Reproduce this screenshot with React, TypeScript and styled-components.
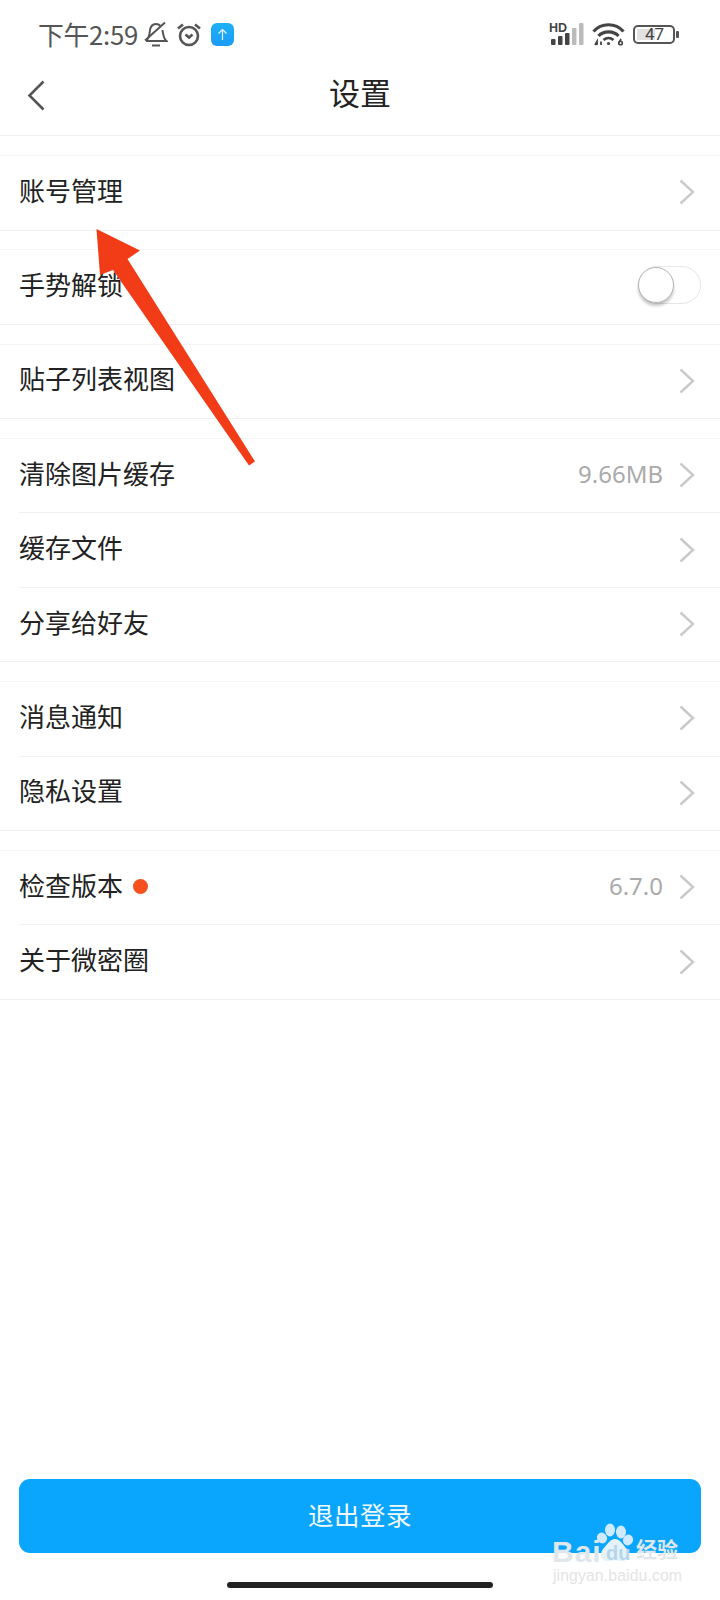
import React from 'react';
import styled, { createGlobalStyle } from 'styled-components';

const GlobalStyle = createGlobalStyle`
  html, body {
    margin: 0;
    padding: 0;
    background: #fff;
  }
  * {
    box-sizing: border-box;
  }
`;

const Page = styled.div`
  position: relative;
  display: flex;
  flex-direction: column;
  width: 720px;
  height: 1600px;
  overflow: hidden;
  background: #fff;
  font-family: "Noto Sans CJK SC", "Noto Sans", sans-serif;
`;

const StatusBar = styled.div`
  display: flex;
  align-items: center;
  justify-content: space-between;
  height: 60px;
  padding: 8px 42px 0 38px;
  color: #555;
`;

const StatusGroup = styled.div`
  display: flex;
  align-items: center;
  gap: ${(p: { $gap: number }) => p.$gap}px;
`;

const Time = styled.span`
  width: 99px;
  margin-right: -1px;
  font-size: 25.8px;
  line-height: 32px;
  letter-spacing: -0.3px;
  white-space: nowrap;
`;

const UploadBadge = styled.div`
  display: flex;
  align-items: center;
  justify-content: center;
  width: 23px;
  height: 23px;
  margin-left: 1px;
  border-radius: 6px;
  background: linear-gradient(180deg, #1fb0f5, #1a9bf8);
`;

const Battery = styled.div`
  position: relative;
  display: flex;
  align-items: center;
  justify-content: center;
  width: 42px;
  height: 19px;
  margin-right: 3px;
  border: 2px solid #555;
  border-radius: 5px;
  font-size: 17px;
  line-height: 15px;
  color: #444;
  font-family: "Roboto", sans-serif;
  &::after {
    content: '';
    position: absolute;
    right: -6px;
    top: 4px;
    width: 3px;
    height: 7px;
    border-radius: 1px;
    background: #555;
  }
`;

const BatteryLevel = styled.span`
  position: absolute;
  left: 2px;
  top: 2px;
  bottom: 2px;
  width: ${(p: { $level: number }) => p.$level}%;
  background: #e2e2e2;
`;

const BatteryText = styled.span`
  position: relative;
  margin-left: 1px;
`;

const NavBar = styled.div`
  position: relative;
  display: flex;
  align-items: center;
  justify-content: center;
  height: 76px;
  border-bottom: 1px solid #f2f2f2;
`;

const BackButton = styled.div`
  position: absolute;
  left: 27px;
  top: 20px;
  display: flex;
`;

const Title = styled.h1`
  margin: 0 0 11px;
  font-size: 31px;
  line-height: 40px;
  font-weight: 400;
  color: #222;
`;

const List = styled.div`
  flex: 1;
  padding-top: 19px;
`;

const Group = styled.div`
  margin-bottom: 18.8px;
  border-top: 1px solid #f5f5f5;
  border-bottom: 1px solid #f0f0f0;
`;

const Row = styled.div`
  display: flex;
  align-items: center;
  height: 73.5px;
  margin-left: 19px;
  padding-right: 25px;
  & + & {
    height: 74.5px;
    border-top: 1px solid #f2f2f2;
  }
`;

const Label = styled.span`
  margin-bottom: 6px;
  font-size: 26px;
  line-height: 34px;
  color: #222;
`;

const Dot = styled.span`
  width: 15px;
  height: 15px;
  margin: 0 0 3px 10px;
  border-radius: 50%;
  background: #f4511e;
`;

const Value = styled.span`
  margin-left: auto;
  margin-right: 16px;
  margin-bottom: 3px;
  font-family: "Noto Sans", sans-serif;
  font-size: 24px;
  line-height: 34px;
  color: #aaa;
`;

const ChevronBox = styled.span`
  display: flex;
  margin-left: ${(p: { $auto: boolean }) => (p.$auto ? 'auto' : '0')};
  margin-bottom: 1px;
`;

const SwitchTrack = styled.div`
  position: relative;
  width: 63px;
  height: 38px;
  margin-left: auto;
  margin-right: -6px;
  margin-bottom: 4px;
  border: 1px solid #e6e6e6;
  border-radius: 19px;
  background: #fff;
`;

const SwitchKnob = styled.div`
  position: absolute;
  left: -1px;
  top: 0;
  width: 36px;
  height: 36px;
  border: 1px solid #b5b5b5;
  border-radius: 50%;
  background: #fff;
  box-shadow: 0 3px 3px rgba(0, 0, 0, 0.22);
`;

const Footer = styled.div`
  display: flex;
  flex-direction: column;
  align-items: center;
  padding: 0 19px;
`;

const LogoutButton = styled.button`
  width: 100%;
  height: 74px;
  padding: 0 0 5px;
  border: none;
  border-radius: 11px;
  background: #0aa5fd;
  color: #f2faff;
  font-family: inherit;
  font-size: 25.5px;
  letter-spacing: 0.5px;
`;

const HomeIndicator = styled.div`
  width: 266px;
  height: 6px;
  margin: 29px 0 12px;
  border-radius: 3px;
  background: #222;
`;

const ArrowOverlay = styled.svg`
  position: absolute;
  left: 0;
  top: 0;
  pointer-events: none;
`;

const Watermark = styled.div`
  position: absolute;
  left: 552px;
  top: 1522px;
  width: 132px;
  height: 64px;
  color: #dfe7ec;
  pointer-events: none;
`;

const WatermarkBrand = styled.span`
  position: absolute;
  left: 0;
  top: 14px;
  font-family: "Liberation Sans", sans-serif;
  font-size: 30px;
  line-height: 32px;
  font-weight: 700;
  letter-spacing: 1px;
`;

const WatermarkDu = styled.span`
  position: absolute;
  left: 54px;
  top: 20px;
  font-family: "Liberation Sans", sans-serif;
  font-size: 20px;
  line-height: 22px;
  font-weight: 700;
  color: #b5d6ea;
`;

const WatermarkCn = styled.span`
  position: absolute;
  left: 84px;
  top: 13px;
  font-size: 21px;
  line-height: 26px;
  font-weight: 700;
`;

const WatermarkUrl = styled.span`
  position: absolute;
  left: 1px;
  top: 45px;
  font-family: "Liberation Sans", sans-serif;
  font-size: 15.8px;
  line-height: 18px;
  letter-spacing: 0.1px;
  white-space: nowrap;
  color: #e4e4e4;
`;

const PawMark = styled.svg`
  position: absolute;
  left: 45px;
  top: 1px;
`;

const Chevron = () => (
  <svg width="16" height="26" viewBox="0 0 16 26" fill="none">
    <path d="M1.5 1.5 L14 13 L1.5 24.5" stroke="#c9c9c9" strokeWidth="2.4" />
  </svg>
);

const BellOff = () => (
  <svg width="24" height="26" viewBox="0 0 24 26" fill="none" stroke="#555" strokeWidth="2">
    <path d="M2 20 C5 17.5 5.5 14 5.8 10.5 C6.2 6 8.5 3 12 3 C14 3 15.5 3.8 16.5 5" />
    <path d="M18.5 9 C19 13 19.5 17.5 22.5 20 H2" />
    <path d="M1 19.5 L21 1.5" />
    <path d="M8 24.5 H16" />
  </svg>
);

const AlarmClock = () => (
  <svg width="26" height="25" viewBox="0 0 26 25" fill="none" stroke="#555" strokeWidth="2.6">
    <circle cx="13" cy="14" r="9" />
    <path d="M9.5 12.5 L13 15.5 L16.5 12.5" />
    <path d="M2 6.5 L7 2.5" />
    <path d="M24 6.5 L19 2.5" />
  </svg>
);

const UploadArrow = () => (
  <svg width="13" height="13" viewBox="0 0 13 13" fill="none" stroke="#e8f7ff" strokeWidth="1.2">
    <path d="M6.5 12 V1.5" />
    <path d="M2.5 5.5 L6.5 1.5 L10.5 5.5" />
  </svg>
);

const Signal = () => (
  <svg width="36" height="24" viewBox="0 0 36 24">
    <text x="1" y="10" fontFamily="Liberation Sans, sans-serif" fontWeight="700" fontSize="12.5" fill="#444">
      HD
    </text>
    <rect x="3" y="17" width="4.5" height="6" rx="1" fill="#444" />
    <rect x="10" y="14" width="4.5" height="9" rx="1" fill="#444" />
    <rect x="17" y="11" width="4.5" height="12" rx="1" fill="#444" />
    <rect x="24" y="6" width="4.5" height="17" rx="1" fill="#bbb" />
    <rect x="31" y="1" width="4.5" height="22" rx="1" fill="#bbb" />
  </svg>
);

const Wifi = () => (
  <svg width="33" height="24" viewBox="0 0 33 24" fill="none" stroke="#444" strokeWidth="3.2">
    <path d="M1.5 9.5 C9.5 0.5 23.5 0.5 31.5 9.5" />
    <path d="M6.5 14 C11.5 8.5 21.5 8.5 26.5 14" />
    <path d="M11.5 18 C14.5 15.5 18.5 15.5 21.5 18" strokeWidth="2.6" />
    <circle cx="16.5" cy="21.5" r="1.6" fill="#444" stroke="none" />
    <path d="M3 23 L5 19.5 V23 M9 23 V19.5" strokeWidth="1.8" />
    <circle cx="28.5" cy="21" r="1.8" strokeWidth="1.6" />
    <path d="M27 20.5 L29 17" strokeWidth="1.6" />
  </svg>
);

const BaiduPaw = () => (
  <PawMark width="36" height="40" viewBox="0 0 36 40" fill="#cfeaff">
    <ellipse cx="13" cy="7" rx="5" ry="6.5" />
    <ellipse cx="24" cy="9" rx="5" ry="6.5" />
    <ellipse cx="5" cy="15" rx="5" ry="5.5" transform="rotate(-25 5 15)" />
    <ellipse cx="31" cy="17" rx="5" ry="5.5" transform="rotate(25 31 17)" />
    <path d="M18 16 C23 16 26 22 30 26 C35 33 30 39 24 38 C20 37 16 37 12 38 C6 39 1 33 6 26 C10 22 13 16 18 16 Z" fill="#e6f2fa" />
  </PawMark>
);

type Item = { label: string; value?: string; dot?: boolean; toggle?: boolean };

const groups: Item[][] = [
  [{ label: '账号管理' }],
  [{ label: '手势解锁', toggle: true }],
  [{ label: '贴子列表视图' }],
  [{ label: '清除图片缓存', value: '9.66MB' }, { label: '缓存文件' }, { label: '分享给好友' }],
  [{ label: '消息通知' }, { label: '隐私设置' }],
  [{ label: '检查版本', value: '6.7.0', dot: true }, { label: '关于微密圈' }],
];

const App: React.FC = () => {
  return (
    <Page>
      <GlobalStyle />
      <StatusBar>
        <StatusGroup $gap={8}>
          <Time>下午2:59</Time>
          <BellOff />
          <AlarmClock />
          <UploadBadge>
            <UploadArrow />
          </UploadBadge>
        </StatusGroup>
        <StatusGroup $gap={8}>
          <Signal />
          <Wifi />
          <Battery>
            <BatteryLevel $level={47} />
            <BatteryText>47</BatteryText>
          </Battery>
        </StatusGroup>
      </StatusBar>

      <NavBar>
        <BackButton>
          <svg width="19" height="31" viewBox="0 0 19 31" fill="none">
            <path d="M16.5 1.5 L2.5 15.5 L16.5 29.5" stroke="#555" strokeWidth="2.6" />
          </svg>
        </BackButton>
        <Title>设置</Title>
      </NavBar>

      <List>
        {groups.map((items) => (
          <Group key={items[0].label}>
            {items.map((item) => (
              <Row key={item.label}>
                <Label>{item.label}</Label>
                {item.dot && <Dot />}
                {item.value && <Value>{item.value}</Value>}
                {item.toggle ? (
                  <SwitchTrack>
                    <SwitchKnob />
                  </SwitchTrack>
                ) : (
                  <ChevronBox $auto={!item.value}>
                    <Chevron />
                  </ChevronBox>
                )}
              </Row>
            ))}
          </Group>
        ))}
      </List>

      <Footer>
        <LogoutButton>退出登录</LogoutButton>
        <HomeIndicator />
      </Footer>

      <ArrowOverlay width="720" height="1600" viewBox="0 0 720 1600">
        <polygon points="96.5,229 140,250.5 127.5,259 255,461.5 249,465.5 113,270 100,275" fill="#f23c18" />
      </ArrowOverlay>

      <Watermark>
        <WatermarkBrand>Bai</WatermarkBrand>
        <BaiduPaw />
        <WatermarkDu>du</WatermarkDu>
        <WatermarkCn>经验</WatermarkCn>
        <WatermarkUrl>jingyan.baidu.com</WatermarkUrl>
      </Watermark>
    </Page>
  );
};

export default App;
